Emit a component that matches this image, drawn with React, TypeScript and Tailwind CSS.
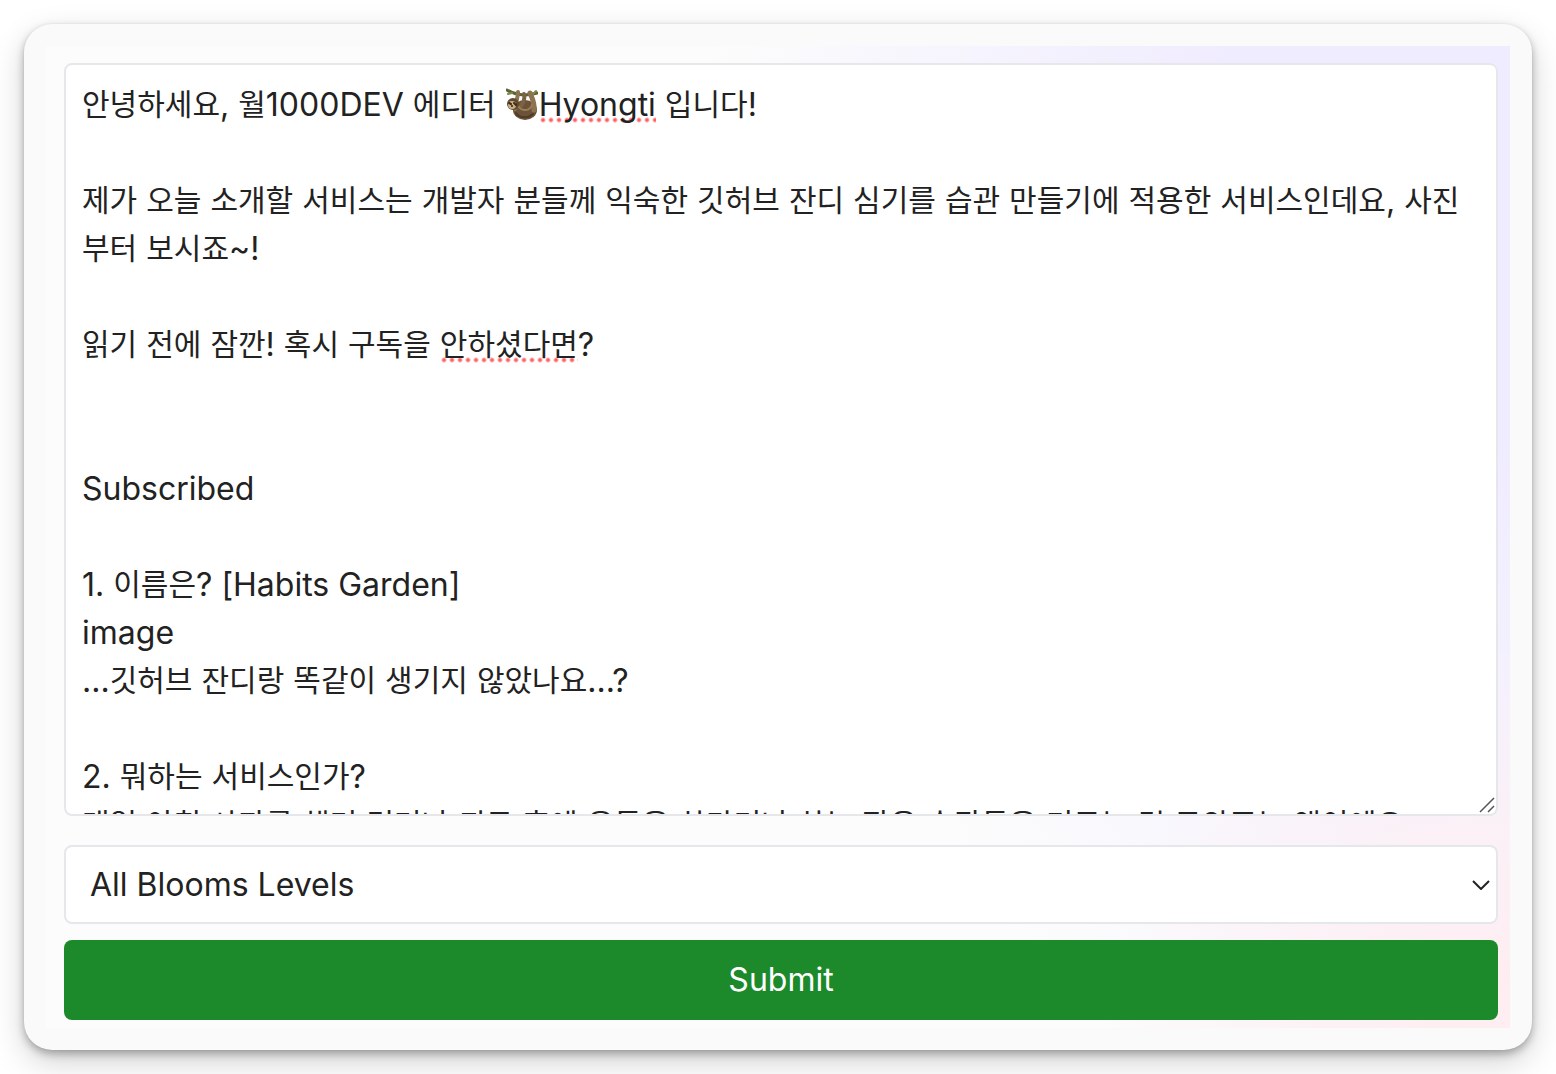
import { useRef, useState } from 'react'
import type { ReactNode, UIEvent } from 'react'

const INITIAL_TEXT = `안녕하세요, 월1000DEV 에디터 🦥Hyongti 입니다!

제가 오늘 소개할 서비스는 개발자 분들께 익숙한 깃허브 잔디 심기를 습관 만들기에 적용한 서비스인데요, 사진부터 보시죠~!

읽기 전에 잠깐! 혹시 구독을 안하셨다면?


Subscribed

1. 이름은? [Habits Garden]
image
...깃허브 잔디랑 똑같이 생기지 않았나요...?

2. 뭐하는 서비스인가?
매일 아침 사과를 챙겨 먹거나 퇴근 후에 운동을 하다거나 하는 작은 습관들을 기르는 걸 도와주는 앱이에요.`

const LEVELS = ['All Blooms Levels', 'Remember', 'Understand', 'Apply', 'Analyze', 'Evaluate', 'Create']

// words the spell checker does not know
const MISSPELLED = /(Hyongti|안하셨다면|🦥)/u
const HANGUL = /([가-힣]+)/

function Sloth() {
  return (
    <svg viewBox="0 0 32 32" className="mx-px inline-block h-8 w-8 align-[-4px]" aria-hidden="true">
      <path d="M1 2C7 6 18 9 31 5" fill="none" stroke="#5b6434" strokeWidth="3" strokeLinecap="round" />
      <path d="M2 6l4-1M26 7l4-4" stroke="#7d8a45" strokeWidth="2" strokeLinecap="round" />
      <ellipse cx="19" cy="22" rx="12" ry="10" fill="#6b5238" />
      <path d="M9 21C10 14 12 9 12 4" fill="none" stroke="#8d7350" strokeWidth="4" strokeLinecap="round" />
      <path d="M15 18C18 14 19 10 18 6" fill="none" stroke="#7b6344" strokeWidth="4" strokeLinecap="round" />
      <path d="M28 22C29 15 26 10 24 5" fill="none" stroke="#8d7350" strokeWidth="5" strokeLinecap="round" />
      <path d="M12 18c4 6 12 5 14-1" fill="none" stroke="#9a7d56" strokeWidth="2" strokeLinecap="round" />
      <path d="M10 25c3 5 12 6 17 1" fill="none" stroke="#4f3a28" strokeWidth="2" strokeLinecap="round" />
      <circle cx="7" cy="16" r="6" fill="#5f4931" />
      <ellipse cx="6" cy="17" rx="4" ry="4" fill="#c9b183" />
      <path d="M3 15l2 1M8 15l2 2" stroke="#3d2a1c" strokeWidth="2" strokeLinecap="round" />
      <circle cx="6" cy="18" r="1" fill="#2e211b" />
    </svg>
  )
}

// Hangul is set a step smaller than the Latin text beside it
function renderText(text: string): ReactNode[] {
  return text.split(HANGUL).map((part, i) =>
    i % 2 ? <span key={i} className="align-[1px] text-[30px] leading-none">{part}</span> : part,
  )
}

function renderMarked(text: string): ReactNode[] {
  return text.split(MISSPELLED).map((part, i) => {
    if (part === '🦥') return <Sloth key={i} />
    if (i % 2) {
      return (
        <span
          key={i}
          className="bg-[radial-gradient(circle_at_center,#ff5f5f_1px,transparent_3px)] bg-[length:8px_6px] bg-[position:left_0_bottom_1px] bg-repeat-x"
        >
          {renderText(part)}
        </span>
      )
    }
    return <span key={i}>{renderText(part)}</span>
  })
}

export default function App() {
  const [text, setText] = useState(INITIAL_TEXT)
  const [level, setLevel] = useState(LEVELS[0])
  const mirrorRef = useRef<HTMLDivElement>(null)

  const onScroll = (e: UIEvent<HTMLTextAreaElement>) => {
    if (mirrorRef.current) mirrorRef.current.scrollTop = e.currentTarget.scrollTop
  }

  return (
    <main className="bg-white p-6 font-[Inter,'Noto_Sans_CJK_KR',sans-serif] text-[32px] leading-12 text-[#222]">
      <div className="rounded-[28px] bg-[#fafafa] p-[22px] shadow-[0_0_2px_rgba(0,0,0,0.08),0_4px_8px_rgba(0,0,0,0.28),0_12px_32px_rgba(0,0,0,0.18)]">
        <form
          onSubmit={(e) => e.preventDefault()}
          className="flex flex-col bg-[#fcfcfc] bg-[radial-gradient(28%_40%_at_100%_100%,#feedf1_10%,rgba(254,237,241,0)),radial-gradient(55%_115%_at_100%_0%,#f0ecff_35%,rgba(240,236,255,0))] pt-[17px] pr-3 pb-2 pl-[18px]"
        >
          <div className="relative h-[753px] rounded-lg bg-white">
            <div
              ref={mirrorRef}
              aria-hidden="true"
              className="absolute inset-0 overflow-hidden rounded-lg border-2 border-transparent px-4 py-4 break-all whitespace-pre-wrap"
            >
              {renderMarked(text)}
            </div>
            <textarea
              aria-label="Text"
              value={text}
              spellCheck={false}
              onChange={(e) => setText(e.target.value)}
              onScroll={onScroll}
              className="relative block h-full w-full resize-none overflow-auto rounded-lg border-2 border-gray-200 bg-transparent px-4 py-4 text-[30px] break-all text-transparent caret-[#222] outline-none [scrollbar-width:none]"
            />
            <svg viewBox="0 0 16 16" className="pointer-events-none absolute right-[3px] bottom-[3px] h-4 w-4" aria-hidden="true">
              <path d="M1 15L15 1M9 15l6-6" stroke="#555" strokeWidth="1.5" />
            </svg>
          </div>

          <div className="relative mt-[29px]">
            <select
              aria-label="Blooms level"
              value={level}
              onChange={(e) => setLevel(e.target.value)}
              className="block h-[79px] w-full appearance-none rounded-lg border-2 border-gray-200 bg-white px-6 outline-none"
            >
              {LEVELS.map((l) => <option key={l}>{l}</option>)}
            </select>
            <svg viewBox="0 0 18 10" className="pointer-events-none absolute top-1/2 right-2 h-[10px] w-[18px] -translate-y-1/2" aria-hidden="true">
              <path d="M1 1l8 8 8-8" fill="none" stroke="#222" strokeWidth="2" />
            </svg>
          </div>

          <button type="submit" className="mt-4 h-20 rounded-lg bg-[#1c8a2b] text-white">Submit</button>
        </form>
      </div>
    </main>
  )
}
